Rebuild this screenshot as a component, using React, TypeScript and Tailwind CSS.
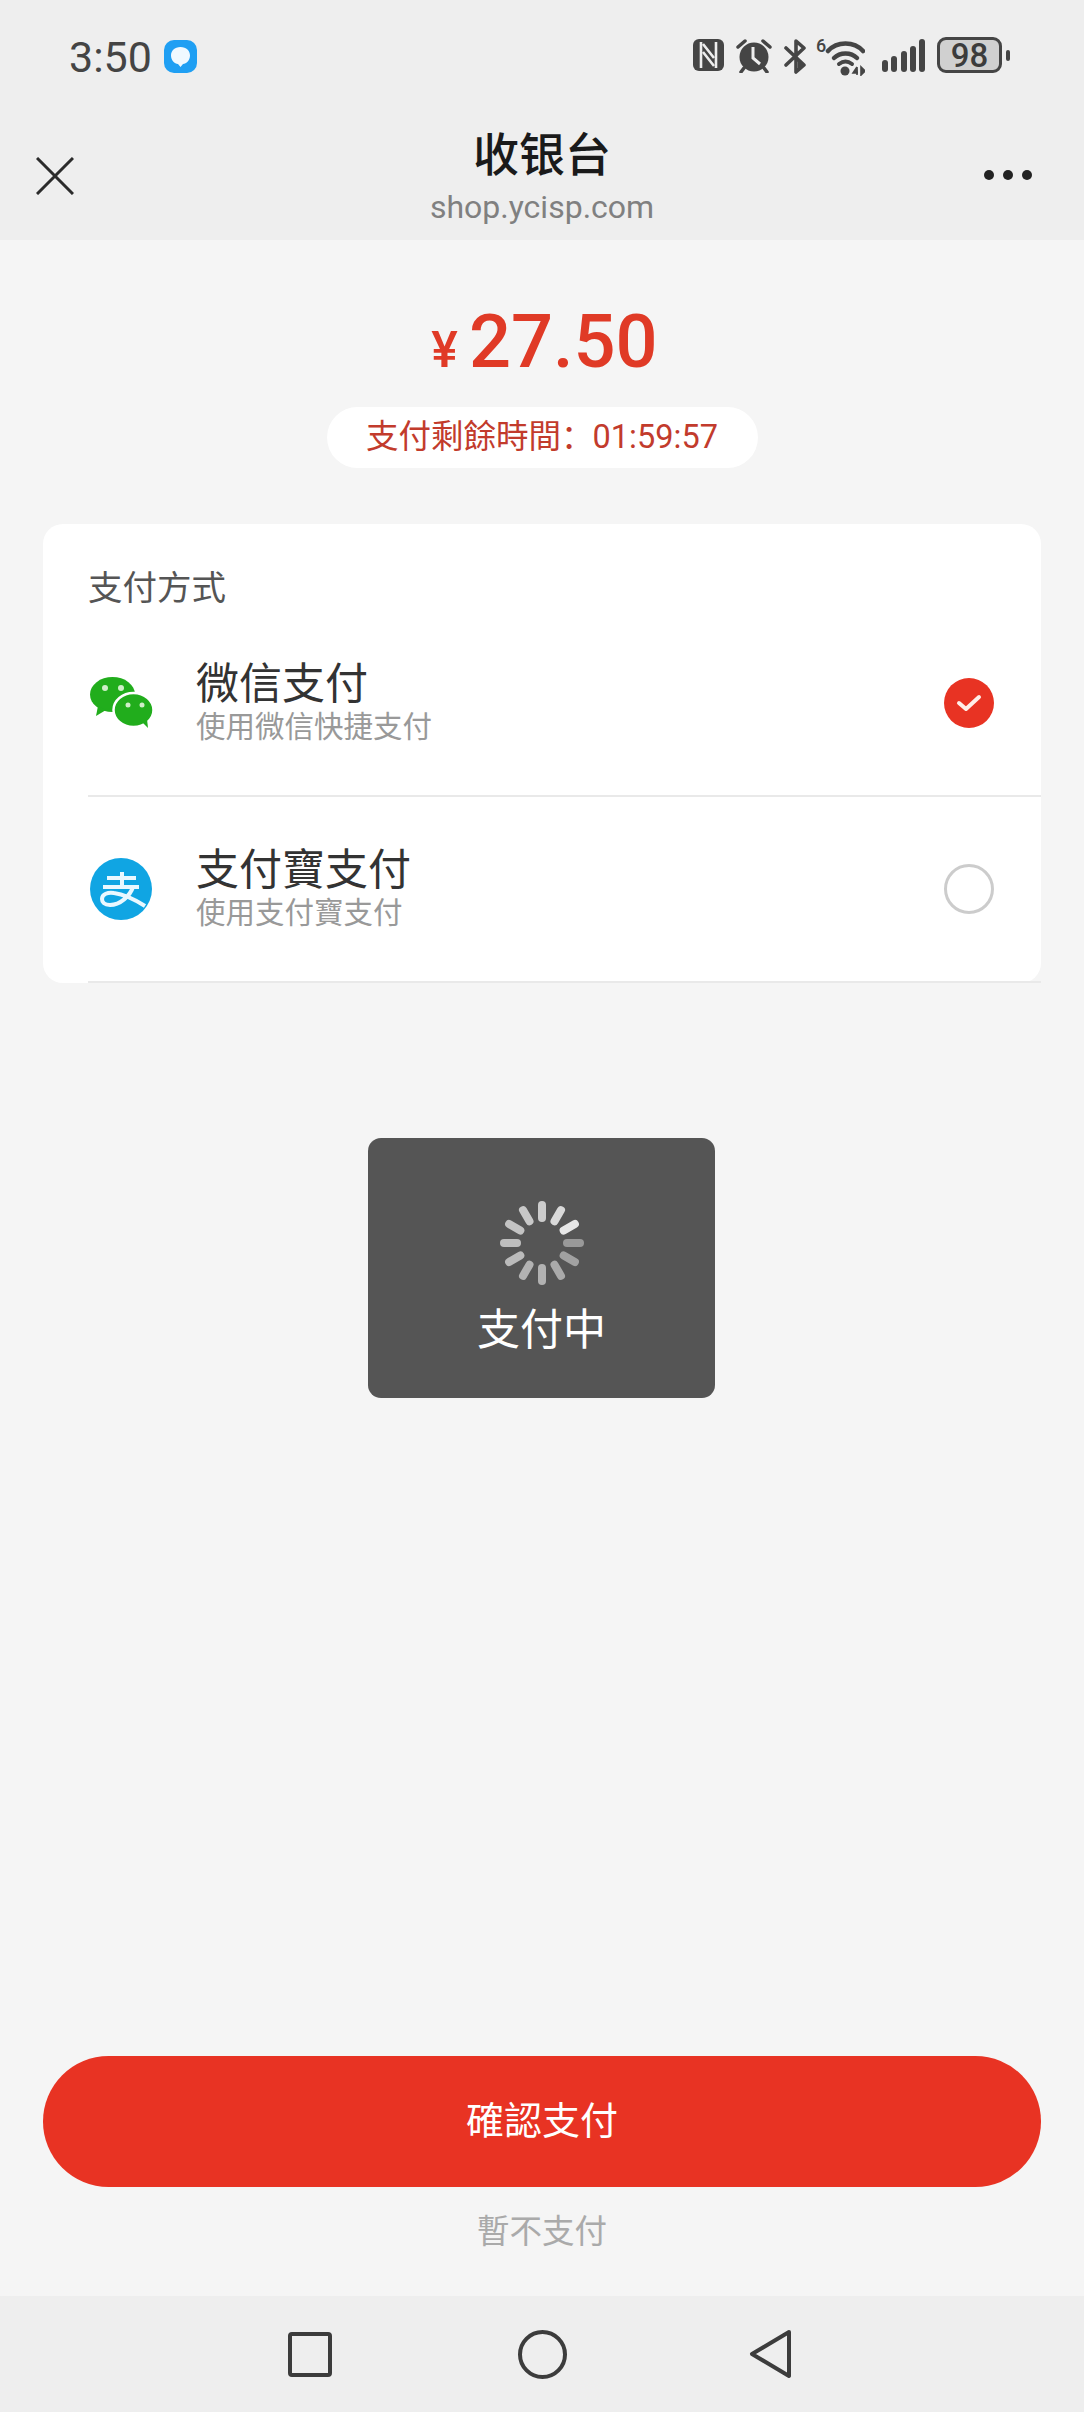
const D = "#454545";

function Nfc() {
  return (
    <svg width="31" height="32" viewBox="0 0 31 32" className="shrink-0">
      <rect x="0" y="0" width="31" height="32" rx="6" fill={D} />
      <path d="M8 3v26M23 3v26" stroke="#eee" strokeWidth="2.6" />
      <path d="M10 5l11 14M10 13l11 14" stroke="#eee" strokeWidth="2.6" />
    </svg>
  );
}

function Alarm() {
  return (
    <svg width="36" height="34" viewBox="0 0 36 34" className="shrink-0">
      <circle cx="18" cy="18" r="14.5" fill={D} />
      <path d="M17 8v11l7 6" stroke="#eee" strokeWidth="3" fill="none" />
      <path d="M2 8l7-6M34 8l-7-6" stroke={D} strokeWidth="3.5" strokeLinecap="round" />
      <path d="M8 29l-3 4M28 29l3 4" stroke={D} strokeWidth="3.5" strokeLinecap="round" />
    </svg>
  );
}

function Bluetooth() {
  return (
    <svg width="23" height="35" viewBox="0 0 23 35" className="shrink-0">
      <path d="M2 9l18 17-8 7V2l8 7L2 26" stroke={D} strokeWidth="3.6" fill="none" strokeLinejoin="round" strokeLinecap="round" />
      <path d="M14 21l5 5-5 4z" fill={D} />
    </svg>
  );
}

function Wifi() {
  return (
    <div className="relative h-[37px] w-[49px] shrink-0">
      <span className="absolute left-0 top-[-3px] text-[18px] font-medium leading-[20px] text-[#454545]">6</span>
      <svg width="49" height="37" viewBox="0 0 49 37" className="absolute left-0 top-0">
        <path d="M12 12C21 2 38 2 47 12" stroke={D} strokeWidth="4.5" fill="none" strokeLinecap="round" />
        <path d="M18 19c6-6 17-6 23 0" stroke={D} strokeWidth="4.5" fill="none" strokeLinecap="round" />
        <path d="M23 25c4-3 9-3 13 0" stroke={D} strokeWidth="4" fill="none" strokeLinecap="round" />
        <circle cx="29" cy="32" r="4.5" fill={D} />
        <path d="M41 28l-4 6h5M41 28v8M45 28v8l4-4z" stroke={D} strokeWidth="1.6" fill={D} />
      </svg>
    </div>
  );
}

function Signal() {
  const bars = [12, 16, 21, 26, 33];
  return (
    <div className="flex h-[33px] w-[43px] shrink-0 items-end justify-between">
      {bars.map((h) => (
        <span key={h} className="w-[6px] rounded-full bg-[#454545]" style={{ height: h }} />
      ))}
    </div>
  );
}

function Battery() {
  return (
    <div className="flex shrink-0 items-center gap-[4px]">
      <div className="flex h-[36px] w-[65px] items-center justify-center rounded-[9px] border-[3px] border-[#454545] bg-[#d0d0d0] text-[33px] font-medium leading-none text-[#3c3c3c]">
        98
      </div>
      <span className="h-[11px] w-[4px] rounded-full bg-[#454545]" />
    </div>
  );
}

function WeChatLogo() {
  return (
    <svg width="64" height="52" viewBox="0 0 64 52" className="shrink-0">
      <ellipse cx="22.5" cy="17.5" rx="22.5" ry="17.5" fill="#21ad1c" />
      <path d="M8 29l-2 10 10-6z" fill="#21ad1c" />
      <ellipse cx="43.5" cy="33" rx="20" ry="17" fill="#21ad1c" stroke="#fff" strokeWidth="2.5" />
      <path d="M52 45l6 6-1-9z" fill="#21ad1c" />
      <circle cx="15" cy="11" r="3" fill="#cfeec9" />
      <circle cx="31" cy="11" r="3" fill="#cfeec9" />
      <circle cx="38" cy="28" r="2.5" fill="#cfeec9" />
      <circle cx="52" cy="28" r="2.5" fill="#cfeec9" />
    </svg>
  );
}

function AlipayLogo() {
  return (
    <svg width="62" height="62" viewBox="0 0 62 62" className="shrink-0">
      <circle cx="31" cy="31" r="31" fill="#10a5e3" />
      <path d="M17 20h29M32 14v15M13 29h36" stroke="#eaf8ff" strokeWidth="4" fill="none" />
      <path d="M43 29c-3 9-13 18-23 18-6 0-8-3-8-6 0-5 6-7 12-6 8 1 20 6 31 13" stroke="#eaf8ff" strokeWidth="4" fill="none" />
    </svg>
  );
}

function Spinner() {
  const op = [0.7, 0.78, 0.86, 0.4, 0.45, 0.5, 0.55, 0.55, 0.6, 0.62, 0.65, 0.68];
  return (
    <svg width="84" height="84" viewBox="0 0 84 84" className="shrink-0">
      {op.map((o, i) => (
        <rect key={i} x="38" y="0" width="8" height="21" rx="4" fill="#fff" opacity={o} transform={`rotate(${i * 30} 42 42)`} />
      ))}
    </svg>
  );
}

function Row({ logo, title, sub, checked }: { logo: React.ReactNode; title: string; sub: string; checked?: boolean }) {
  return (
    <div className="flex h-[186px] items-center border-b-2 border-[#e9e9e9] pr-[47px]">
      <div className="flex w-[108px] items-center pl-[2px]">{logo}</div>
      <div className="flex flex-1 flex-col pb-[2px]">
        <div className="text-[43px] leading-[48px] text-[#333]">{title}</div>
        <div className="mt-[2px] text-[29.5px] leading-[34px] text-[#999]">{sub}</div>
      </div>
      {checked ? (
        <div className="flex h-[50px] w-[50px] items-center justify-center rounded-full bg-[#e83323]">
          <svg width="26" height="20" viewBox="0 0 26 20">
            <path d="M3 10l7 6L23 4" stroke="#ffeee8" strokeWidth="4" fill="none" strokeLinecap="round" strokeLinejoin="round" />
          </svg>
        </div>
      ) : (
        <div className="h-[50px] w-[50px] rounded-full border-[3px] border-[#cccccc]" />
      )}
    </div>
  );
}

export default function App() {
  return (
    <div className="relative flex h-[2412px] w-[1084px] flex-col overflow-hidden bg-[#f5f5f5] font-['Roboto','Noto_Sans_CJK_SC',sans-serif]">
      <header className="h-[240px] shrink-0 bg-[#eeeeee]">
        <div className="flex h-[112px] items-start pl-[69px] pr-[74px] pt-[37px]">
          <span className="text-[43px] leading-[40px] text-[#444]">3:50</span>
          <div className="ml-[12px] mt-[3px] flex h-[33px] w-[33px] items-center justify-center rounded-[10px] bg-[#1f9ff3]">
            <svg width="23" height="23" viewBox="0 0 23 23">
              <path d="M11.5 2C5.5 2 2 6 2 10.5S5.5 19 9 19l2.5 3 2.5-3c3.5 0 7-4 7-8.5S17.5 2 11.5 2z" fill="#f0f9ff" />
            </svg>
          </div>
          <div className="ml-auto mt-[2px] flex items-start">
            <Nfc />
            <div className="ml-[12px]"><Alarm /></div>
            <div className="ml-[12px]"><Bluetooth /></div>
            <div className="ml-[9px]"><Wifi /></div>
            <div className="ml-[17px]"><Signal /></div>
            <div className="ml-[12px] -mt-[2px]"><Battery /></div>
          </div>
        </div>
        <div className="grid h-[128px] grid-cols-[1fr_auto_1fr] px-[36px]">
          <div className="flex items-start pt-[45px]">
            <svg width="38" height="38" viewBox="0 0 38 38">
              <path d="M1 1l36 36M37 1L1 37" stroke="#2b2b2b" strokeWidth="3" fill="none" />
            </svg>
          </div>
          <div className="flex flex-col items-center pt-[15px]">
            <div className="text-[46px] font-medium leading-[56px] text-[#1a1a1a]">收银台</div>
            <div className="mt-[4px] text-[32px] leading-[40px] text-[#808080]">shop.ycisp.com</div>
          </div>
          <div className="flex items-start justify-end pr-[16px] pt-[58px]">
            <div className="flex gap-[9px]">
              <span className="h-[10px] w-[10px] rounded-full bg-[#222]" />
              <span className="h-[10px] w-[10px] rounded-full bg-[#222]" />
              <span className="h-[10px] w-[10px] rounded-full bg-[#222]" />
            </div>
          </div>
        </div>
      </header>

      <main className="relative flex flex-1 flex-col items-center">
        <div className="ml-[5px] mt-[60px] flex items-baseline text-[#e03a26]">
          <span className="mr-[11px] text-[50px] font-medium leading-[84px]">¥</span>
          <span className="text-[74px] font-medium leading-[84px]">27.50</span>
        </div>
        <div className="mt-[15px] flex h-[61px] w-[431px] items-center justify-center rounded-full bg-white text-[32.5px] leading-none text-[#c23b2c]">
          <span>支付剩餘時間：</span>
          <span className="-ml-[1px]">01:59:57</span>
        </div>

        <section className="mt-[56px] w-[998px] rounded-[20px] bg-white pl-[45px]">
          <div className="pt-[44px] text-[34.5px] leading-[40px] text-[#555]">支付方式</div>
          <div className="mt-[3px]">
            <Row logo={<WeChatLogo />} title="微信支付" sub="使用微信快捷支付" checked />
            <Row logo={<AlipayLogo />} title="支付寶支付" sub="使用支付寶支付" />
          </div>
        </section>

        <div className="absolute left-[368px] top-[898px] flex h-[260px] w-[347px] flex-col items-center rounded-[13px] bg-[#555555] pt-[63px] text-white">
          <Spinner />
          <div className="mt-[20px] text-[43px] leading-[50px]">支付中</div>
        </div>

        <div className="mt-auto flex w-full flex-col items-center pb-[45px]">
          <button className="flex h-[131px] w-[998px] items-center justify-center rounded-full bg-[#e83323] text-[38px] text-white">
            確認支付
          </button>
          <div className="mt-[26px] text-[32.5px] leading-[38px] text-[#aaaaaa]">暫不支付</div>
        </div>
      </main>

      <nav className="flex h-[116px] shrink-0 items-center justify-center bg-[#eeeeee] pr-[3px]">
        <div className="h-[45px] w-[44px] rounded-[4px] border-[4px] border-[#3c3c3c]" />
        <div className="ml-[186px] h-[49px] w-[49px] rounded-full border-[4px] border-[#3c3c3c]" />
        <svg width="44" height="50" viewBox="0 0 44 50" className="ml-[182px]">
          <path d="M40 3 L3 25 L40 47 Z" stroke="#3c3c3c" strokeWidth="4" fill="none" strokeLinejoin="round" />
        </svg>
      </nav>
    </div>
  );
}
